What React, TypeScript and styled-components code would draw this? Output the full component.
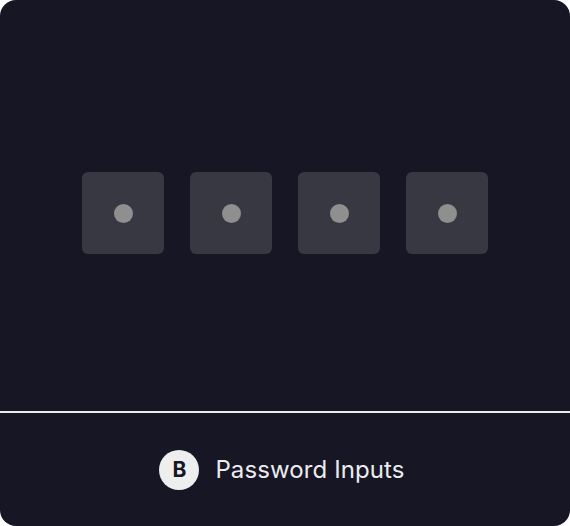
import React from 'react';
import styled, { createGlobalStyle } from 'styled-components';

const GlobalStyle = createGlobalStyle`
  html, body {
    margin: 0;
    padding: 0;
    background: #ffffff;
  }
  body {
    font-family: Inter, "Noto Sans", sans-serif;
  }
`;

const Card = styled.div`
  width: 570px;
  height: 526px;
  background: #171624;
  border-radius: 16px;
  overflow: hidden;
  display: flex;
  flex-direction: column;
`;

const Stage = styled.div`
  height: 411px;
  box-sizing: border-box;
  padding-top: 15px;
  display: flex;
  align-items: center;
  justify-content: center;
  gap: 26px;
`;

const Divider = styled.div`
  height: 2px;
  background: #ececf0;
`;

const Digit = styled.div`
  width: 82px;
  height: 82px;
  border-radius: 6px;
  background: #383843;
  display: flex;
  align-items: center;
  justify-content: center;
`;

const Dot = styled.span`
  width: 19px;
  height: 19px;
  border-radius: 50%;
  background: #8f8f8f;
`;

const Caption = styled.div`
  flex: 1;
  display: flex;
  align-items: center;
  justify-content: center;
  gap: 16px;
  padding-right: 6px;
`;

const Badge = styled.span`
  width: 40px;
  height: 40px;
  border-radius: 50%;
  background: #eeeeee;
  color: #171624;
  font-weight: 700;
  font-size: 21px;
  display: flex;
  align-items: center;
  justify-content: center;
`;

const Label = styled.span`
  color: #ececf0;
  font-size: 24px;
  font-weight: 400;
  letter-spacing: 0.1px;
`;

const App: React.FC = () => {
  return <>
    <GlobalStyle />
    <Card>
      <Stage>
        {[0, 1, 2, 3].map(i => <Digit key={i}><Dot /></Digit>)}
      </Stage>
      <Divider />
      <Caption>
        <Badge>B</Badge>
        <Label>Password Inputs</Label>
      </Caption>
    </Card>
  </>;
};

export default App;
